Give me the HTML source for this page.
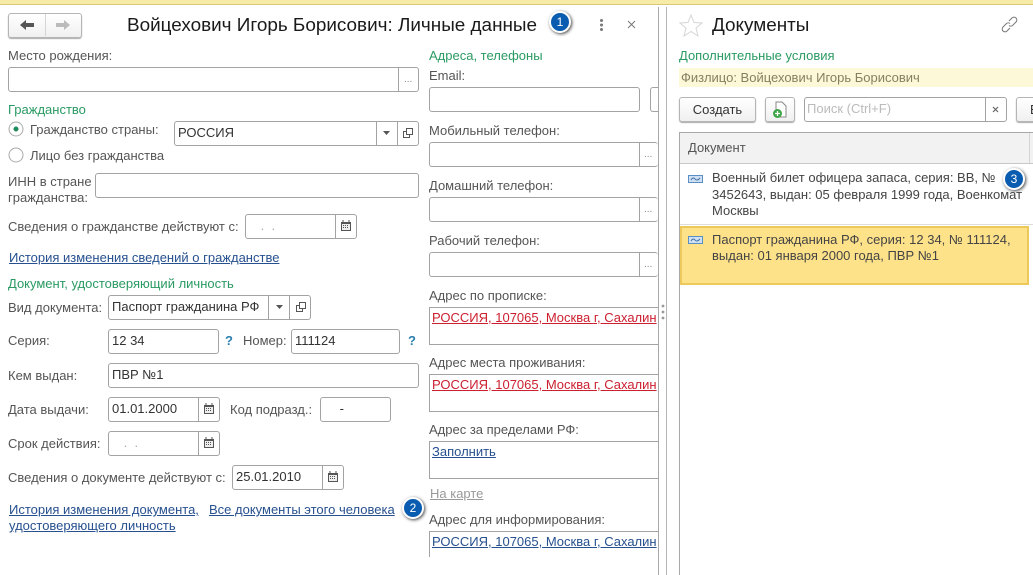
<!DOCTYPE html>
<html lang="ru"><head><meta charset="utf-8"><title>Личные данные</title>
<style>
html,body{margin:0;padding:0;background:#fff}
#p{position:relative;width:1033px;height:575px;overflow:hidden;background:#fff;font:13px/16px "Liberation Sans",sans-serif;color:#555}
#p div,#p a,#p svg{position:absolute}
.t{white-space:nowrap}
.g{color:#2a9a62}
.l{color:#26508f;text-decoration:underline;white-space:nowrap}
.i{box-sizing:border-box;border:1px solid #a3a3a3;border-radius:3px;height:25px;background:#fff;color:#333;padding:3px;white-space:nowrap;overflow:hidden}
.d{width:1px;background:#a3a3a3;height:23px}
.dots{color:#888;font-size:10px;white-space:nowrap}
.m{color:#aaa}
.b{box-sizing:border-box;border:1px solid #b5b5b5;border-radius:3px;height:25px;background:linear-gradient(#fff,#f0f0f0);box-shadow:0 1px 1px #aaa;overflow:hidden}
.a{box-sizing:border-box;border:1px solid #a3a3a3;border-right:0;background:#fff;height:38px;left:429px;width:229px;padding:2px;white-space:nowrap;overflow:hidden}
.badge{box-sizing:border-box;width:22px;height:22px;border-radius:50%;background:#0a5cb0;border:2px solid #fff;box-shadow:1px 1px 3px #444;color:#fff;font-size:12px;line-height:18px;text-align:center}
</style></head><body><div id="p">
<div style="left:0;top:0;width:1033px;height:4px;background:#f6eca8"></div>
<div style="left:0;top:4px;width:1033px;height:1px;background:#d9c878"></div>
<div style="left:658px;top:7px;width:1px;height:568px;background:#a8a8a8"></div>
<div style="left:666px;top:7px;width:1px;height:568px;background:#b5b5b5"></div>

<div class="b" style="left:8px;top:13px;width:74px"></div>
<div style="left:45px;top:14px;width:1px;height:22px;background:#d5d5d5"></div>
<svg style="left:20px;top:19px" width="15" height="12" viewBox="0 0 15 12"><path d="M0 6 6 1V4H14V8H6V11Z" fill="#555"/></svg>
<svg style="left:55px;top:19px" width="15" height="12" viewBox="0 0 15 12"><path d="M15 6 9 1V4H1V8H9V11Z" fill="#bbb"/></svg>
<div class="t" style="left:127px;top:15px;font-size:18.9px;line-height:22px;color:#1a1a1a">Войцехович Игорь Борисович: Личные данные</div>
<div class="badge" style="left:549px;top:11px">1</div>
<svg style="left:599px;top:18px" width="5" height="14"><circle cx="2.5" cy="2.5" r="1.5" fill="#777"/><circle cx="2.5" cy="7" r="1.5" fill="#777"/><circle cx="2.5" cy="11.500" r="1.500" fill="#777"/></svg>
<svg style="left:627px;top:20px" width="9" height="9"><path d="M1 1 8 8M8 1 1 8" stroke="#777" stroke-width="1"/></svg>

<div class="t" style="left:8px;top:48px">Место рождения:</div>
<div class="i" style="left:8px;top:67px;width:411px"></div><div class="d" style="left:398px;top:68px"></div><div class="dots" style="left:404px;top:72px">...</div>
<div class="t g" style="left:8px;top:102px">Гражданство</div>
<svg style="left:8px;top:121px" width="16" height="16"><circle cx="8" cy="8" r="7" fill="#fff" stroke="#aaa"/><circle cx="8" cy="8" r="2.500" fill="#1f8a5b"/></svg>
<div class="t" style="left:30px;top:122px">Гражданство страны:</div>
<div class="i" style="left:174px;top:121px;width:245px">РОССИЯ</div><div class="d" style="left:376px;top:122px"></div><div class="d" style="left:397px;top:122px"></div>
<svg style="left:383px;top:131px" width="7" height="4"><path d="M0 0H7L3.500 4Z" fill="#555"/></svg>
<svg style="left:403px;top:128px" width="10" height="10" fill="none" stroke="#555"><rect x="3.500" y=".5" width="6" height="6"/><path d="M3 3.500H.5V9.500H6.500V7"/></svg>
<svg style="left:8px;top:147px" width="16" height="16"><circle cx="8" cy="8" r="7" fill="#fff" stroke="#aaa"/></svg>
<div class="t" style="left:30px;top:148px">Лицо без гражданства</div>
<div class="t" style="left:8px;top:174px">ИНН в стране</div><div class="t" style="left:8px;top:190px">гражданства:</div>
<div class="i" style="left:95px;top:173px;width:324px"></div>
<div class="t" style="left:8px;top:219px">Сведения о гражданстве действуют с:</div>
<div class="i m" style="left:245px;top:214px;width:112px;padding-left:11px;color:#aaa">&nbsp;.&nbsp;&nbsp;.</div><div class="d" style="left:335px;top:215px"></div>
<svg class="cal" style="left:341px;top:220px" width="10" height="11"><path d="M0 2H10V11H0Z" fill="#555"/><path d="M1 4H9V10H1Z" fill="#eee"/><path d="M2 0V2M8 0V2" stroke="#555"/><path d="M2 5.500H8M2 7.500H8" stroke="#555" stroke-dasharray="1 1"/></svg>
<a class="l" style="left:9px;top:250px">История изменения сведений о гражданстве</a>
<div class="t g" style="left:8px;top:276px">Документ, удостоверяющий личность</div>
<div class="t" style="left:8px;top:300px">Вид документа:</div>
<div class="i" style="left:108px;top:295px;width:203px">Паспорт гражданина РФ</div><div class="d" style="left:268px;top:296px"></div><div class="d" style="left:289px;top:296px"></div>
<svg style="left:276px;top:305px" width="7" height="4"><path d="M0 0H7L3.500 4Z" fill="#555"/></svg>
<svg style="left:296px;top:302px" width="10" height="10" fill="none" stroke="#555"><rect x="3.500" y=".5" width="6" height="6"/><path d="M3 3.500H.5V9.500H6.500V7"/></svg>
<div class="t" style="left:8px;top:333px">Серия:</div>
<div class="i" style="left:108px;top:329px;width:111px">12 34</div>
<div class="t" style="left:225px;top:333px;color:#2a7fae;font-weight:bold">?</div>
<div class="t" style="left:243px;top:333px">Номер:</div>
<div class="i" style="left:291px;top:329px;width:109px">111124</div>
<div class="t" style="left:408px;top:333px;color:#2a7fae;font-weight:bold">?</div>
<div class="t" style="left:8px;top:368px">Кем выдан:</div>
<div class="i" style="left:108px;top:363px;width:311px">ПВР №1</div>
<div class="t" style="left:8px;top:402px">Дата выдачи:</div>
<div class="i" style="left:108px;top:397px;width:112px">01.01.2000</div><div class="d" style="left:198px;top:398px"></div>
<svg style="left:204px;top:403px" width="10" height="11"><path d="M0 2H10V11H0Z" fill="#555"/><path d="M1 4H9V10H1Z" fill="#eee"/><path d="M2 0V2M8 0V2" stroke="#555"/><path d="M2 5.500H8M2 7.500H8" stroke="#555" stroke-dasharray="1 1"/></svg>
<div class="t" style="left:230px;top:402px">Код подразд.:</div>
<div class="i" style="left:320px;top:397px;width:71px;padding-left:15px">&nbsp;-</div>
<div class="t" style="left:8px;top:436px">Срок действия:</div>
<div class="i" style="left:108px;top:431px;width:112px;padding-left:11px;color:#aaa">&nbsp;.&nbsp;&nbsp;.</div><div class="d" style="left:198px;top:432px"></div>
<svg style="left:204px;top:437px" width="10" height="11"><path d="M0 2H10V11H0Z" fill="#555"/><path d="M1 4H9V10H1Z" fill="#eee"/><path d="M2 0V2M8 0V2" stroke="#555"/><path d="M2 5.500H8M2 7.500H8" stroke="#555" stroke-dasharray="1 1"/></svg>
<div class="t" style="left:8px;top:470px">Сведения о документе действуют с:</div>
<div class="i" style="left:232px;top:465px;width:112px">25.01.2010</div><div class="d" style="left:322px;top:466px"></div>
<svg style="left:328px;top:471px" width="10" height="11"><path d="M0 2H10V11H0Z" fill="#555"/><path d="M1 4H9V10H1Z" fill="#eee"/><path d="M2 0V2M8 0V2" stroke="#555"/><path d="M2 5.500H8M2 7.500H8" stroke="#555" stroke-dasharray="1 1"/></svg>
<a class="l" style="left:9px;top:502px">История изменения документа,</a>
<a class="l" style="left:209px;top:502px">Все документы этого человека</a>
<a class="l" style="left:9px;top:518px">удостоверяющего личность</a>
<div class="badge" style="left:402px;top:497px">2</div>

<div class="t g" style="left:429px;top:48px">Адреса, телефоны</div>
<div class="t" style="left:429px;top:68px">Email:</div>
<div class="i" style="left:429px;top:87px;width:211px"></div>
<div class="i" style="left:650px;top:87px;width:8px;border-right:0;border-radius:3px 0 0 3px"></div>
<div class="t" style="left:429px;top:123px">Мобильный телефон:</div>
<div class="i" style="left:429px;top:142px;width:229px;border-right:0"></div><div class="d" style="left:639px;top:143px"></div><div class="dots" style="left:644px;top:147px">...</div>
<div class="t" style="left:429px;top:178px">Домашний телефон:</div>
<div class="i" style="left:429px;top:197px;width:229px;border-right:0"></div><div class="d" style="left:639px;top:198px"></div><div class="dots" style="left:644px;top:202px">...</div>
<div class="t" style="left:429px;top:233px">Рабочий телефон:</div>
<div class="i" style="left:429px;top:252px;width:229px;border-right:0"></div><div class="d" style="left:639px;top:253px"></div><div class="dots" style="left:644px;top:257px">...</div>
<div class="t" style="left:429px;top:288px">Адрес по прописке:</div>
<div class="a" style="top:307px"><span style="color:#cc1f2f;text-decoration:underline">РОССИЯ, 107065, Москва г, Сахалин</span></div>
<div class="t" style="left:429px;top:355px">Адрес места проживания:</div>
<div class="a" style="top:374px"><span style="color:#cc1f2f;text-decoration:underline">РОССИЯ, 107065, Москва г, Сахалин</span></div>
<div class="t" style="left:429px;top:422px">Адрес за пределами РФ:</div>
<div class="a" style="top:441px"><span style="color:#26508f;text-decoration:underline">Заполнить</span></div>
<a class="t" style="left:430px;top:486px;color:#999;text-decoration:underline">На карте</a>
<div class="t" style="left:429px;top:512px">Адрес для информирования:</div>
<div class="a" style="top:531px;height:26px;border-bottom:0"><span style="color:#26508f;text-decoration:underline">РОССИЯ, 107065, Москва г, Сахалин</span></div>
<svg style="left:661px;top:304px" width="4" height="16"><circle cx="2" cy="2" r="1.400" fill="#999"/><circle cx="2" cy="8" r="1.400" fill="#999"/><circle cx="2" cy="14" r="1.400" fill="#999"/></svg>

<svg style="left:679px;top:14px" width="24" height="23" viewBox="0 0 24 23"><path d="M12 1 15 8.500 23 9 17 14 19 22 12 17.500 5 22 7 14 1 9 9 8.500Z" fill="#fff" stroke="#d5d5d5"/></svg>
<div class="t" style="left:712px;top:15px;font-size:18.9px;line-height:22px;color:#1a1a1a">Документы</div>
<svg style="left:1001px;top:16px" width="17" height="17" viewBox="0 0 17 17" fill="none" stroke="#777" stroke-width="1"><path d="M8 5 11 2A2.600 2.600 0 0 1 15 6L11.500 9.500A2.600 2.600 0 0 1 8 9.500"/><path d="M9 12 6 15A2.600 2.600 0 0 1 2 11L5.500 7.500A2.600 2.600 0 0 1 9 7.500"/></svg>
<div class="t g" style="left:679px;top:48px">Дополнительные условия</div>
<div style="left:679px;top:68px;width:354px;height:19px;background:#fdf8d8"></div>
<div class="t" style="left:681px;top:70px;color:#86805f">Физлицо: Войцехович Игорь Борисович</div>
<div class="b" style="left:679px;top:97px;width:77px;text-align:center;line-height:23px;color:#333">Создать</div>
<div class="b" style="left:765px;top:97px;width:30px"></div>
<svg style="left:772px;top:101px" width="16" height="18" viewBox="0 0 16 18"><path d="M4 1H10L14 5V16H4Z" fill="#fff" stroke="#888"/><circle cx="5.500" cy="12.500" r="4.500" fill="#3fa648"/><path d="M5.500 10V15M3 12.500H8" stroke="#fff" stroke-width="1.200"/></svg>
<div class="i" style="left:804px;top:97px;width:203px;color:#bbb;padding-left:2px">Поиск (Ctrl+F)</div><div class="d" style="left:985px;top:98px"></div>
<svg style="left:992px;top:106px" width="7" height="7"><path d="M1 1 6 6M6 1 1 6" stroke="#666" stroke-width="1.200"/></svg>
<div class="b" style="left:1016px;top:97px;width:30px;padding-left:13px;line-height:23px;color:#333">В</div>

<div style="box-sizing:border-box;left:679px;top:132px;width:354px;height:443px;border:1px solid #a8a8a8;border-right:0;border-bottom:0"></div>
<div style="left:680px;top:133px;width:353px;height:30px;background:#f2f2f2;border-bottom:1px solid #c8c8c8"></div>
<div style="left:1029px;top:133px;width:1px;height:30px;background:#d5d5d5"></div>
<div class="t" style="left:688px;top:140px">Документ</div>
<svg style="left:688px;top:175px" width="15" height="8" viewBox="0 0 15 8"><rect x=".5" y=".5" width="14" height="7" fill="#cfe0f2" stroke="#5a8fc4"/><path d="M3 5Q5 1.500 7 4T12 3" fill="none" stroke="#3d6fa8"/></svg>
<div class="t" style="left:712px;top:170px;color:#444">Военный билет офицера запаса, серия: ВВ, №</div>
<div class="t" style="left:712px;top:187px;color:#444">3452643, выдан: 05 февраля 1999 года, Военкомат</div>
<div class="t" style="left:712px;top:203px;color:#444">Москвы</div>
<div style="left:680px;top:224px;width:353px;height:1px;background:#ddd"></div>
<div class="badge" style="left:1003px;top:168px">3</div>
<div style="box-sizing:border-box;left:680px;top:226px;width:349px;height:59px;background:#fde28a;border:2px solid #ecc95a"></div>
<svg style="left:688px;top:236px" width="15" height="8" viewBox="0 0 15 8"><rect x=".5" y=".5" width="14" height="7" fill="#cfe0f2" stroke="#5a8fc4"/><path d="M3 5Q5 1.500 7 4T12 3" fill="none" stroke="#3d6fa8"/></svg>
<div class="t" style="left:712px;top:232px;color:#444">Паспорт гражданина РФ, серия: 12 34, № 111124,</div>
<div class="t" style="left:712px;top:248px;color:#444">выдан: 01 января 2000 года, ПВР №1</div>
</div></body></html>
